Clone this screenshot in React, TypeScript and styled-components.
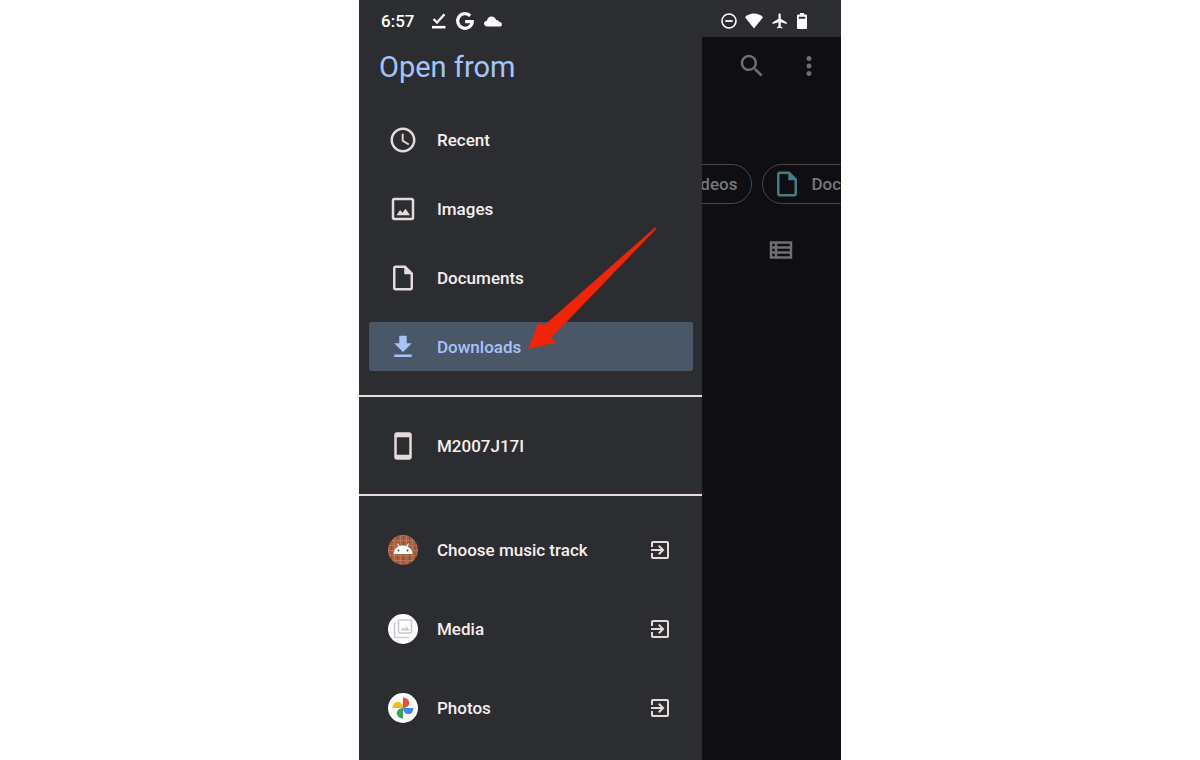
import React from "react";
import styled, { createGlobalStyle } from "styled-components";

const GlobalStyle = createGlobalStyle`
  * { box-sizing: border-box; }
  body {
    margin: 0;
    background: #ffffff;
    font-family: Roboto, "Liberation Sans", sans-serif;
  }
`;

const Page = styled.div`
  display: flex;
  justify-content: center;
  min-height: 100vh;
`;

const Phone = styled.main`
  position: relative;
  display: flex;
  flex-direction: column;
  width: 100%;
  max-width: 482px;
  overflow: hidden;
  background: #2c2d31;
`;

const StatusBar = styled.header`
  display: flex;
  align-items: center;
  justify-content: space-between;
  height: 37px;
  padding: 5px 34px 0 22px;
  color: #ffffff;
`;

const StatusGroup = styled.div<{ $gap: number }>`
  display: flex;
  align-items: center;
  gap: ${(p) => p.$gap}px;
`;

const Clock = styled.time`
  margin-right: 8px;
  font-size: 17px;
  font-weight: 500;
  line-height: 20px;
`;

const Body = styled.div`
  display: flex;
  flex: 1;
`;

const Drawer = styled.nav`
  display: flex;
  flex-direction: column;
  flex: 0 0 343px;
`;

const Title = styled.h1`
  margin: 12px 20px 30px;
  font-size: 29px;
  font-weight: 400;
  line-height: 36px;
  color: #a4c4fa;
`;

const Section = styled.ul<{ $gap: number; $pad: string }>`
  display: flex;
  flex-direction: column;
  gap: ${(p) => p.$gap}px;
  margin: 0;
  padding: ${(p) => p.$pad};
  list-style: none;

  & + & {
    border-top: 2px solid #e8dcdf;
  }
`;

const RowButton = styled.button<{ $active?: boolean }>`
  display: flex;
  align-items: center;
  gap: 19px;
  width: 100%;
  height: 49px;
  padding: 0 21px 0 19px;
  border: 0;
  border-radius: 2px;
  background: ${(p) => (p.$active ? "#4a5767" : "transparent")};
  color: ${(p) => (p.$active ? "#a4c4fa" : "#e6dadb")};
  font: inherit;
  text-align: left;
  cursor: pointer;
`;

const Label = styled.span<{ $active?: boolean }>`
  flex: 1;
  font-size: 17px;
  font-weight: 500;
  line-height: 24px;
  color: ${(p) => (p.$active ? "#a4c4fa" : "#f6efee")};
`;

const Pane = styled.section`
  display: flex;
  flex: 1;
  flex-direction: column;
  min-width: 0;
  overflow: hidden;
  background: #0e0e13;
  color: #6f6f72;
`;

const Toolbar = styled.div`
  display: flex;
  justify-content: flex-end;
  gap: 27px;
  padding: 14px 17px 0 0;
`;

const IconButton = styled.button`
  display: flex;
  padding: 0;
  border: 0;
  background: none;
  color: inherit;
  cursor: pointer;
`;

const Chips = styled.div`
  display: flex;
  gap: 10px;
  margin: 83px 0 0 -66px;
`;

const Chip = styled.button`
  display: flex;
  flex: none;
  align-items: center;
  gap: 9px;
  height: 40px;
  padding: 0 14px 0 9px;
  border: 1px solid #48484b;
  border-radius: 20px;
  background: none;
  color: #77777a;
  font-family: inherit;
  font-size: 17px;
  font-weight: 500;
  line-height: 24px;

  svg {
    color: #3f8084;
  }
`;

const ViewRow = styled.div`
  display: flex;
  justify-content: flex-end;
  padding: 31px 45px 0 0;
`;

const Pointer = styled.svg`
  position: absolute;
  left: 168px;
  top: 226px;
  pointer-events: none;
`;

const Glyph = ({ d, size = 30 }: { d: string; size?: number }) => (
  <svg width={size} height={size} viewBox="0 0 24 24" fill="currentColor" aria-hidden="true">
    <path fillRule="evenodd" d={d} />
  </svg>
);

const icons = {
  recent:
    "M11.99 2C6.47 2 2 6.48 2 12s4.47 10 9.99 10C17.52 22 22 17.52 22 12S17.52 2 11.99 2zM12 20c-4.42 0-8-3.58-8-8s3.58-8 8-8 8 3.58 8 8-3.58 8-8 8zM12.5 7H11v6l5.25 3.15.75-1.23-4.5-2.67z",
  images:
    "M19 5v14H5V5h14m0-2H5c-1.1 0-2 .9-2 2v14c0 1.1.9 2 2 2h14c1.1 0 2-.9 2-2V5c0-1.1-.9-2-2-2zM6.8 17h10.800l-3.600-5.200-2.400 3.200-1.900-2.200z",
  document:
    "M14 2H6c-1.1 0-1.99.9-1.99 2L4 20c0 1.1.89 2 1.99 2H18c1.1 0 2-.9 2-2V8l-6-6zM6 20V4h7v5h5v11H6z",
  download: "M19 9h-4V3H9v6H5l7 7 7-7zM5 18v2h14v-2H5z",
  phone:
    "M17 1.01L7 1c-1.1 0-1.99.9-1.99 2v18c0 1.1.89 2 1.99 2h10c1.1 0 2-.9 2-2V3c0-1.1-.9-1.99-2-1.99zM17 19H7V5h10v14z",
  open:
    "M10.090 15.590L11.500 17l5-5-5-5-1.410 1.410L12.670 11H3v2h9.670l-2.580 2.590zM19 3H5c-1.110 0-2 .9-2 2v4h2V5h14v14H5v-4H3v4c0 1.100.89 2 2 2h14c1.100 0 2-.9 2-2V5c0-1.100-.9-2-2-2z",
  search:
    "M15.5 14h-.79l-.28-.27C15.41 12.59 16 11.11 16 9.5 16 5.91 13.09 3 9.5 3S3 5.91 3 9.5 5.91 16 9.5 16c1.61 0 3.09-.59 4.23-1.57l.27.28v.79l5 4.99L20.49 19l-4.99-5zm-6 0C7.01 14 5 11.99 5 9.5S7.01 5 9.5 5 14 7.01 14 9.5 11.99 14 9.5 14z",
  more:
    "M12 8c1.1 0 2-.9 2-2s-.9-2-2-2-2 .9-2 2 .9 2 2 2zm0 2c-1.1 0-2 .9-2 2s.9 2 2 2 2-.9 2-2-.9-2-2-2zm0 6c-1.1 0-2 .9-2 2s.9 2 2 2 2-.9 2-2-.9-2-2-2z",
  list:
    "M3 5v14h18V5H3zm4 2v2H5V7h2zm-2 6v-2h2v2H5zm0 2h2v2H5v-2zm14 2H9v-2h10v2zm0-4H9v-2h10v2zm0-4H9V7h10v2z",
  plane:
    "M21 16v-2l-8-5V3.500c0-.83-.67-1.500-1.500-1.500S10 2.670 10 3.500V9l-8 5v2l8-2.500V19l-2 1.500V22l3.500-1 3.500 1v-1.500L13 19v-5.500l8 2.500z",
};

const SavedIcon = () => (
  <svg width="14" height="16" viewBox="0 0 14 16" fill="none" stroke="currentColor" aria-hidden="true">
    <path d="M1.500 6 5 9.500 12.500 1.300" strokeWidth="2.300" />
    <path d="M0 14.200h13.500" strokeWidth="2.600" />
  </svg>
);

const GoogleIcon = () => (
  <svg width="18" height="18" viewBox="0 0 18 18" fill="none" stroke="currentColor" strokeWidth="3.200" aria-hidden="true">
    <path d="M14.200 3.800A7.300 7.300 0 1 0 16.300 9.600H9.200" />
  </svg>
);

const CloudIcon = () => (
  <svg width="18" height="11" viewBox="0 0 18 11" fill="currentColor" aria-hidden="true">
    <path d="M3.200 10.500C1.300 10.500 0 9.300 0 7.600 0 6 1.200 4.900 2.900 4.700 3.500 2 5.200.5 7.600.5c2.200 0 3.800 1.300 4.500 3.500 1.500-.2 2.500.6 2.900 1.800 1.800.1 3 1 3 2.400 0 1.400-1 2.300-2.600 2.300z" />
  </svg>
);

const DndIcon = () => (
  <svg width="16" height="16" viewBox="0 0 16 16" fill="none" stroke="currentColor" aria-hidden="true">
    <circle cx="8" cy="8" r="7" strokeWidth="1.600" />
    <path d="M4.300 8h7.400" strokeWidth="1.800" />
  </svg>
);

const WifiIcon = () => (
  <svg width="18" height="16" viewBox="0 0 18 16" fill="currentColor" aria-hidden="true">
    <path d="M9 15.500 0 4.200C2.500 1.700 5.600.5 9 .5s6.500 1.200 9 3.700z" />
  </svg>
);

const BatteryIcon = () => (
  <svg width="10" height="16" viewBox="0 0 10 16" fill="currentColor" aria-hidden="true">
    <path fillRule="evenodd" d="M3 0h4v1.500h2q1 0 1 1V15q0 1-1 1H1q-1 0-1-1V2.500q0-1 1-1h2zM1.800 3.700v2h6.400v-2z" />
  </svg>
);

const MusicAvatar = () => (
  <svg width="30" height="30" viewBox="0 0 30 30" aria-hidden="true">
    <defs>
      <pattern id="brick" width="6" height="5" patternUnits="userSpaceOnUse">
        <rect width="6" height="5" fill="#a85e40" />
        <path d="M0 .5h6M.5 0v5" stroke="#b87659" strokeWidth="1" />
        <path d="M3.500 1v4" stroke="#905039" strokeWidth="1" />
      </pattern>
    </defs>
    <circle cx="15" cy="15" r="15" fill="url(#brick)" />
    <path d="M5.500 19c.3-5 4-8.500 9.500-8.500s9.200 3.500 9.500 8.500z" fill="#fff" />
    <path d="m9.500 8.500 1.800 3.500m9.200-3.500-1.800 3.500" stroke="#fff" strokeWidth="1" />
    <circle cx="10.500" cy="15.500" r="1" fill="#444" />
    <circle cx="19.500" cy="15.500" r="1" fill="#444" />
  </svg>
);

const MediaAvatar = () => (
  <svg width="30" height="30" viewBox="0 0 30 30" fill="none" stroke="#c9c9cf" aria-hidden="true">
    <circle cx="15" cy="15" r="15" fill="#fff" stroke="none" />
    <rect x="10.500" y="6" width="13" height="13" rx="1" strokeWidth="1.600" />
    <path d="M6.500 9v13.500q0 1 1 1H21" strokeWidth="1.600" />
    <path d="m12.500 16.500 2.500-3 1.500 1.700 2-3 3 4.300z" fill="#c9c9cf" stroke="none" />
  </svg>
);

const PhotosAvatar = () => (
  <svg width="30" height="30" viewBox="0 0 30 30" aria-hidden="true">
    <circle cx="15" cy="15" r="15" fill="#fff" />
    <path d="M15 4.500a6.200 5.250 0 0 1 0 10.500z" fill="#e94b3c" />
    <path d="M25.500 15a5.250 6.200 0 0 1-10.500 0z" fill="#4285f4" />
    <path d="M15 25.500a6.200 5.250 0 0 1 0-10.500z" fill="#34a257" />
    <path d="M4.500 15a5.250 6.200 0 0 1 10.500 0z" fill="#f0bd1c" />
  </svg>
);

type RowProps = { icon: React.ReactNode; label: string; active?: boolean; external?: boolean };

const Row = ({ icon, label, active, external }: RowProps) => (
  <li>
    <RowButton type="button" $active={active}>
      {icon}
      <Label $active={active}>{label}</Label>
      {external && <Glyph d={icons.open} size={24} />}
    </RowButton>
  </li>
);

export default function App() {
  return (
    <Page>
      <GlobalStyle />
      <Phone>
        <StatusBar>
          <StatusGroup $gap={10}>
            <Clock>6:57</Clock>
            <SavedIcon />
            <GoogleIcon />
            <CloudIcon />
          </StatusGroup>
          <StatusGroup $gap={8}>
            <DndIcon />
            <WifiIcon />
            <Glyph d={icons.plane} size={18} />
            <BatteryIcon />
          </StatusGroup>
        </StatusBar>
        <Body>
          <Drawer aria-label="Open from">
            <Title>Open from</Title>
            <Section $gap={20} $pad="0 9px 24px 10px">
              <Row icon={<Glyph d={icons.recent} />} label="Recent" />
              <Row icon={<Glyph d={icons.images} />} label="Images" />
              <Row icon={<Glyph d={icons.document} />} label="Documents" />
              <Row icon={<Glyph d={icons.download} />} label="Downloads" active />
            </Section>
            <Section $gap={20} $pad="24px 9px 24px 10px">
              <Row icon={<Glyph d={icons.phone} />} label="M2007J17I" />
            </Section>
            <Section $gap={30} $pad="29px 9px 24px 10px">
              <Row icon={<MusicAvatar />} label="Choose music track" external />
              <Row icon={<MediaAvatar />} label="Media" external />
              <Row icon={<PhotosAvatar />} label="Photos" external />
            </Section>
          </Drawer>
          <Pane>
            <Toolbar>
              <IconButton type="button" aria-label="Search">
                <Glyph d={icons.search} />
              </IconButton>
              <IconButton type="button" aria-label="More options">
                <Glyph d={icons.more} />
              </IconButton>
            </Toolbar>
            <Chips>
              <Chip type="button">
                <Glyph d={icons.images} />
                Videos
              </Chip>
              <Chip type="button">
                <Glyph d={icons.document} />
                Documents
              </Chip>
            </Chips>
            <ViewRow>
              <IconButton type="button" aria-label="List view">
                <Glyph d={icons.list} />
              </IconButton>
            </ViewRow>
          </Pane>
        </Body>
        <Pointer width="132" height="126" viewBox="0 0 132 126" aria-hidden="true">
          <path d="M1 123 11.500 96.500 17 99.500 128 1.500 129.500 2.500 24 112 29 116.500z" fill="#f12405" />
        </Pointer>
      </Phone>
    </Page>
  );
}
